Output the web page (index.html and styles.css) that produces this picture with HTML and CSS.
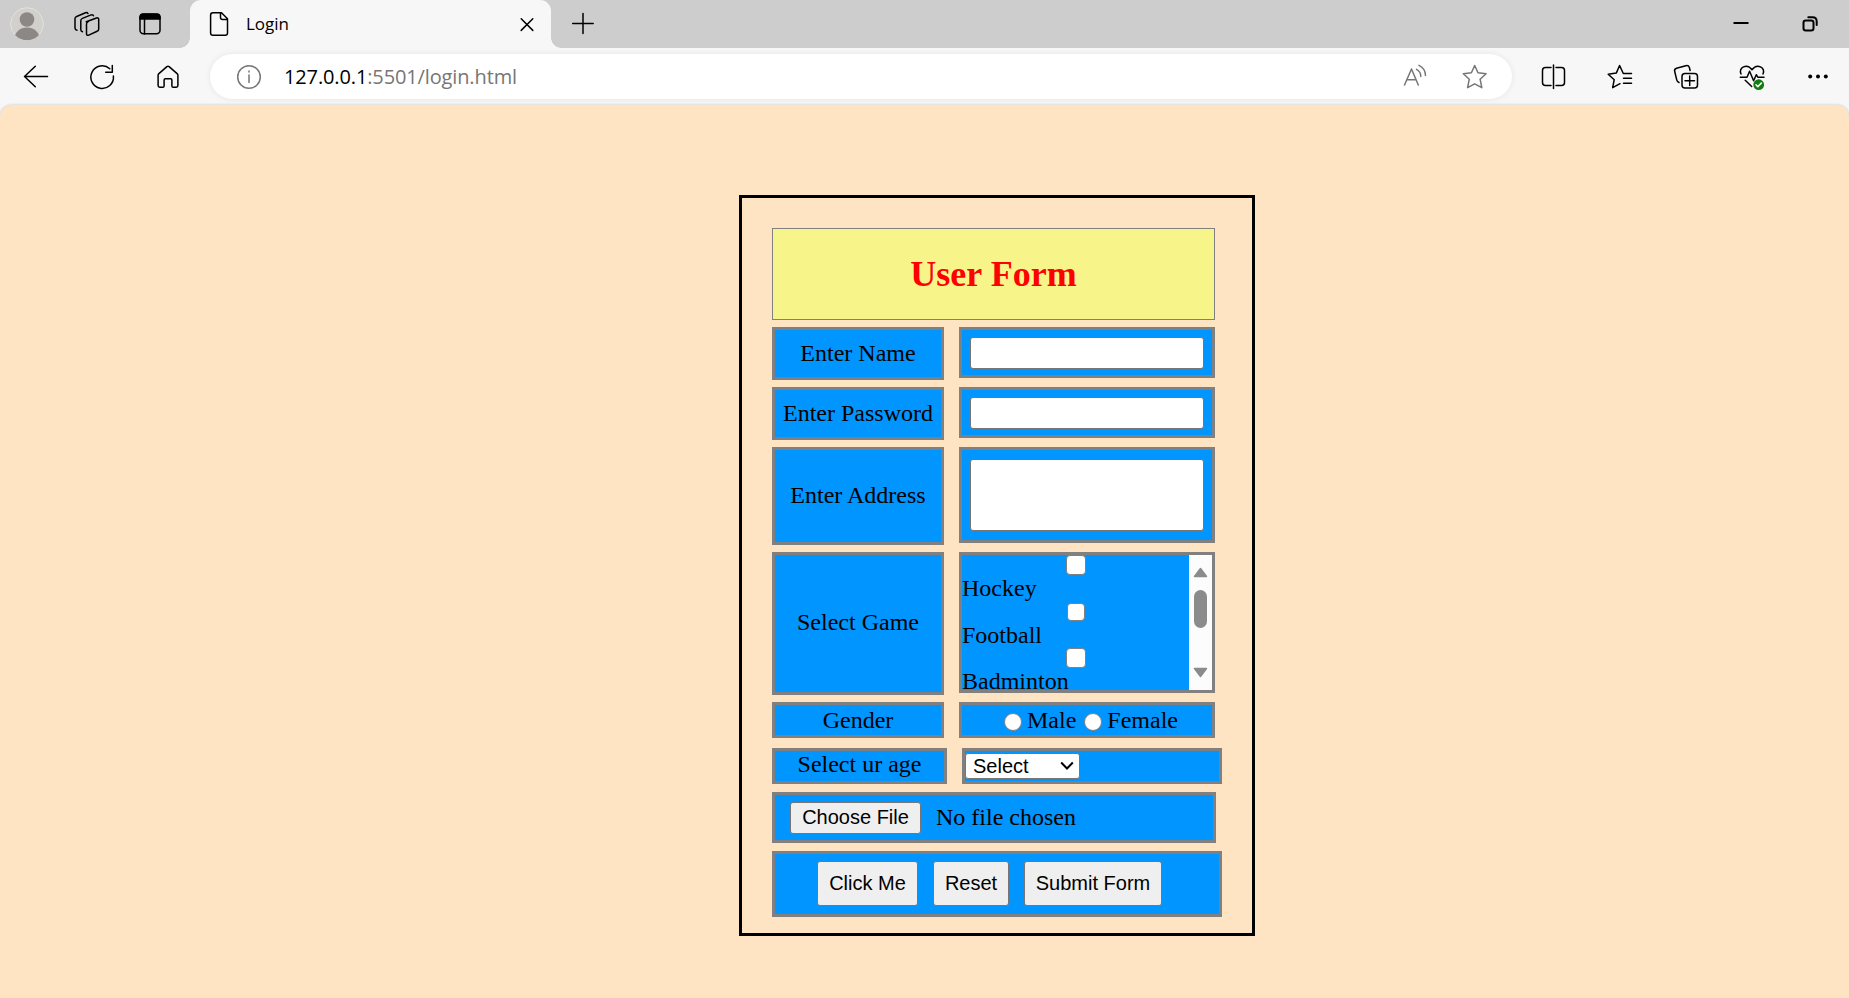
FILE: index.html
```html
<!DOCTYPE html>
<html lang="en">
<head>
<meta charset="utf-8">
<title>Login</title>
<link rel="stylesheet" href="styles.css">
</head>
<body>
<header class="tabbar">
  <svg class="avatar" viewBox="0 0 34 34"><defs><clipPath id="face"><circle cx="17" cy="17" r="16.3"/></clipPath></defs><circle cx="17" cy="17" r="16.3" fill="#d2d0cd" stroke="#e4e2da"/><g clip-path="url(#face)" fill="#8b8886"><circle cx="17" cy="12.5" r="7.3"/><ellipse cx="17" cy="31.5" rx="12.5" ry="11"/></g></svg>
  <svg class="icon spaces" viewBox="0 0 28 28"><path d="M13.3 11.8 23.5 8q2.200-.6 2.200 1.600v9.600q0 1.600-1.600 2.100l-8.300 3.800q-2.300.9-2.300-1.400v-9.800q0-1.600 1.800-2.300M9.500 21.700q-1.700-.3-1.700-2v-9q0-1.700 1.600-2.300l8.700-3.500q1.800-.6 2.400.9M4 20.200q-2-.4-2-2.200V8.800q0-1.700 1.600-2.300L12.500 2.800q1.800-.6 2.400.7"/></svg>
  <svg class="icon sidebar" viewBox="0 0 28 28"><rect x="4" y="4.200" width="20" height="19.600" rx="3.500"/><path d="M8.500 9v15"/><path d="M4 9V6.500Q4.500 4 7 4h14q2.500 0 3 2.500V9z" fill="#000"/></svg>
  <div class="tab">
    <svg class="icon" viewBox="0 0 28 28"><path d="M8 2.700h8.500l6 6V23q0 2.300-2.300 2.300H8Q5.600 25.300 5.600 23V5Q5.600 2.700 8 2.700zM15.500 3v4.500q0 2 2 2h5"/></svg>
    <span class="tab-title">Login</span>
    <svg class="icon close" viewBox="0 0 28 28"><path d="m8.200 8.800 11.600 11.600m0-11.600L8.200 20.400"/></svg>
  </div>
  <svg class="icon plus" viewBox="0 0 28 28"><path d="M14 3.500v20M3.700 13.500h20.500"/></svg>
  <svg class="icon minimize" viewBox="0 0 28 28"><path d="M6.500 13h15" stroke-width="2" stroke-linecap="butt"/></svg>
  <svg class="icon restore" viewBox="0 0 28 28"><g stroke-width="2"><rect x="7.500" y="10.500" width="10" height="10" rx="2.300"/><path d="M12.300 7.300h4.200q4.200 0 4.200 4.200V15"/></g></svg>
</header>
<nav class="toolbar">
  <svg class="icon" viewBox="0 0 28 28"><path d="M25.500 13.500H2.500m10.800-10.300L2.500 13.500l10.800 10.300"/></svg>
  <svg class="icon" viewBox="0 0 28 28"><path d="M25.400 13a11.300 11.300 0 1 1-3.600-7.200M24.300 2.600v6.700h-6.600"/></svg>
  <svg class="icon" viewBox="0 0 28 28"><path d="M5.800 24.300q-1.700 0-1.700-1.700V12.300q0-1 .8-1.700l8-7q1.100-.9 2.200 0l8 7q.8.7.8 1.700v10.300q0 1.700-1.700 1.700h-3q-1.300 0-1.300-1.300V17q0-1.300-1.300-1.300h-5.200q-1.300 0-1.300 1.300v6q0 1.300-1.300 1.300z"/></svg>
  <div class="address">
    <svg class="icon muted" viewBox="0 0 28 28"><circle cx="14" cy="14" r="11.300"/><path d="M14 12v7.500M14 8v1"/></svg>
    <span class="url"><b>127.0.0.1</b>:5501/login.html</span>
    <svg class="icon muted read" viewBox="0 0 28 28"><path d="M3.500 22 10.500 6l6.800 16M6 16.700h9M15.500 6.300q4.400 2.200 4.300 7.200M18 2.300q6.500 3.200 6.500 10.200"/></svg>
    <svg class="icon muted star" viewBox="0 0 28 28"><path d="m13.700 2.500 3.300 7.300 8.100.9-6 5.500 1.700 8.500-7.100-3.900-7.100 3.900 1.700-8.500-6-5.500 8.100-.9z"/></svg>
  </div>
  <svg class="icon" viewBox="0 0 28 28"><path d="M13.500 2v23.500M11 4.500H5.500q-3 0-3 3v12q0 3 3 3H11M16 4.500h5.500q3 0 3 3v12q0 3-3 3H16"/></svg>
  <svg class="icon" viewBox="0 0 28 28"><path d="M25.500 10.500h-8.200l-3.700-8-3.300 7.600-8.100 1.100 6 5.500-1.500 8 7.300-4M17.500 15.200h8M17.500 20.200h8"/></svg>
  <svg class="icon" viewBox="0 0 28 28"><rect x="10" y="10.500" width="15.500" height="14.500" rx="3"/><path d="M17.700 13v9.500M13 17.800h9.500M7 19.500q-1.800-.6-2.200-2.300L2.700 8.500Q2 6 4.500 5.200l9.300-2.500q2.700-.6 3.600 1.800l.7 3"/></svg>
  <svg class="icon" viewBox="0 0 28 28"><path d="M3 11C0 4.500 9-.2 14 6.700 19-.2 28 4.500 25 11M2.300 14.200H9l2.600-6 4 9.500 2.700-6 1.500 2.500H26M7.200 17.300l6.500 6.200"/><circle cx="20.700" cy="21.700" r="5.400" fill="#107c10" stroke="none"/><path d="m18 21.800 1.800 1.800 3.500-3.500" stroke="#fff"/></svg>
  <svg class="icon" viewBox="0 0 28 28"><g fill="#000" stroke="none"><circle cx="6.200" cy="13.600" r="2"/><circle cx="14" cy="13.600" r="2"/><circle cx="21.800" cy="13.600" r="2"/></g></svg>
</nav>
<main class="page">
  <form class="form">
    <h1 class="title">User Form</h1>
    <div class="row"><label class="label">Enter Name</label><div class="field center"><input class="text" type="text"></div></div>
    <div class="row"><label class="label">Enter Password</label><div class="field center"><input class="text" type="password"></div></div>
    <div class="row address-row"><label class="label">Enter Address</label><div class="field center"><textarea class="text area"></textarea></div></div>
    <div class="row game-row"><label class="label">Select Game</label>
      <div class="field games">
        <div class="game-list">
          <div class="game"><input class="check" type="checkbox">Hockey</div>
          <div class="game"><input class="check small" type="checkbox">Football</div>
          <div class="game"><input class="check" type="checkbox">Badminton</div>
        </div>
        <div class="scrollbar">
          <svg class="arrow" viewBox="0 0 15 11"><path d="M7.500 1.500 13.500 9.500h-12z"/></svg>
          <div class="thumb"></div>
          <svg class="arrow down" viewBox="0 0 15 11"><path d="M7.500 9.500 13.500 1.500h-12z"/></svg>
        </div>
      </div>
    </div>
    <div class="row gender-row"><label class="label">Gender</label><div class="field genders"><input class="radio" type="radio" name="gender"><span class="male">Male</span><input class="radio" type="radio" name="gender"><span>Female</span></div></div>
    <div class="row age-row"><label class="label">Select ur age</label><div class="field ages"><div class="select">Select<svg class="chevron" viewBox="0 0 14 10"><path d="m1.200 1.500 5.800 6 5.800-6"/></svg></div></div></div>
    <div class="file-row"><button class="button choose" type="button">Choose File</button><span>No file chosen</span></div>
    <div class="actions"><button class="button click" type="button">Click Me</button><button class="button reset" type="button">Reset</button><button class="button submit" type="button">Submit Form</button></div>
  </form>
</main>
</body>
</html>
```
FILE: styles.css
```css
* { box-sizing: border-box; }
body { margin: 0; height: 998px; overflow: hidden; display: flex; flex-direction: column; background: #f7f7f7; font-family: "Liberation Serif", serif; font-size: 24px; color: #000; }
svg { display: block; flex: none; }
.icon { width: 28px; height: 28px; fill: none; stroke: #000; stroke-width: 1.5; stroke-linecap: round; stroke-linejoin: round; }
.muted { stroke: #767676; }
.tabbar { height: 48px; flex: none; display: flex; align-items: center; background: #cdcdcd; padding-left: 10px; }
.avatar { width: 34px; height: 34px; }
.spaces { margin-left: 29px; }
.sidebar { margin-left: 35px; }
.tab { position: relative; width: 361px; height: 48px; margin-left: 26px; padding-left: 15px; display: flex; align-items: center; background: #f7f7f7; border-radius: 11px 11px 0 0; font-family: "Open Sans", sans-serif; font-size: 17px; }
.tab::before, .tab::after { content: ""; position: absolute; bottom: 0; width: 10px; height: 10px; }
.tab::before { left: -10px; background: radial-gradient(circle at 0 0, #cdcdcd 9.5px, #f7f7f7 10px); }
.tab::after { right: -10px; background: radial-gradient(circle at 100% 0, #cdcdcd 9.5px, #f7f7f7 10px); }
.tab-title { margin-left: 13px; padding-bottom: 2px; }
.close { margin-left: auto; margin-right: 10px; }
.plus { margin-left: 18px; }
.minimize { margin-left: auto; }
.restore { margin-left: 41px; margin-right: 25px; }
.toolbar { height: 57px; flex: none; display: flex; align-items: center; gap: 38px; padding-left: 22px; }
.address { width: 1302px; height: 45px; margin: 0 -10px; padding: 0 23px 0 25px; display: flex; align-items: center; background: #fff; border-radius: 23px; box-shadow: 0 0 6px rgba(0,0,0,.08); font-family: "Open Sans", sans-serif; font-size: 20px; color: #767676; }
.url { margin-left: 21px; white-space: nowrap; letter-spacing: -0.13px; }
.url b { font-weight: 400; color: #000; }
.read { margin-left: auto; margin-right: 32px; }
.page { flex: 1; padding: 90px 0 0 739px; background: #ffe4c4; border-radius: 12px 12px 0 0; box-shadow: 0 0 3px rgba(0,0,0,.2); }
.form { width: 516px; height: 741px; padding: 30px; border: 3px solid #000; }
.title { width: 443px; height: 92px; margin: 0 0 7px; border: 1px solid #808080; background: #f7f589; color: #f00; font-size: 36px; line-height: 90px; text-align: center; }
.row { width: 443px; height: 53px; margin-bottom: 7px; display: grid; grid-template-columns: 172px 256px; grid-template-rows: 100%; column-gap: 15px; align-items: start; }
.label, .field, .file-row, .actions { border: 3px solid #808080; background: #0095ff; }
.label { height: 100%; display: flex; align-items: center; justify-content: center; }
.field { height: calc(100% - 2px); }
.center { display: flex; align-items: center; justify-content: center; }
.text { width: 234px; height: 32px; margin: 0; padding: 2px; border: 1px solid #767676; border-radius: 3px; background: #fff; outline: 0; resize: none; }
.address-row { height: 98px; }
.address-row .label, .game-row .label { padding-bottom: 2px; }
.area { height: 72px; }
.game-row { height: 143px; }
.games { display: flex; overflow: hidden; }
.game-list { flex: 1; overflow: hidden; }
.game { display: flow-root; height: 46.5px; line-height: 27px; }
.check { appearance: none; display: block; width: 20px; height: 20px; margin: 0 auto; border: 1.5px solid #808080; border-radius: 4px; background: #fff; }
.small { width: 18px; height: 18px; margin: 1px auto; }
.scrollbar { width: 23px; padding-top: 12px; display: flex; flex-direction: column; align-items: center; background: #fcfcfc; }
.arrow { width: 15px; height: 11px; fill: #8b8b8b; stroke: #8b8b8b; stroke-width: 1.5; stroke-linejoin: round; }
.thumb { width: 13px; height: 38px; margin-top: 12px; border-radius: 7px; background: #8b8b8b; }
.down { margin-top: 39px; }
.gender-row { height: 36px; }
.gender-row .field, .age-row .field { height: 100%; }
.genders { display: flex; align-items: center; padding-left: 42px; line-height: 30px; }
.radio { appearance: none; width: 18px; height: 18px; margin: 4px 5px 0 0; border: 1.5px solid #808080; border-radius: 50%; background: #fff; }
.male { margin-right: 8px; }
.age-row { width: 450px; height: 36px; margin-top: 10px; margin-bottom: 8px; grid-template-columns: 175px 260px; }
.age-row .label { padding-bottom: 3px; }
.ages { padding-top: 2px; }
.select { width: 115px; height: 26px; padding: 0 5px 0 7px; display: flex; align-items: center; justify-content: space-between; border: 1px solid #767676; border-radius: 3px; background: #fff; font: 20px "Liberation Sans", sans-serif; }
.chevron { width: 14px; height: 10px; fill: none; stroke: #000; stroke-width: 2; }
.file-row { width: 444px; height: 51px; padding-left: 15px; display: flex; align-items: center; gap: 15px; }
.button { margin: 0; padding: 0; border: 1px solid #767676; border-radius: 3px; background: #efefef; font: 20px "Liberation Sans", sans-serif; color: #000; }
.choose { width: 131px; height: 32px; }
.actions { width: 450px; height: 66px; margin-top: 8px; display: flex; align-items: flex-start; gap: 15px; padding: 7px 0 0 42px; }
.click { width: 101px; height: 45px; }
.reset { width: 76px; height: 45px; }
.submit { width: 138px; height: 45px; }
.click, .reset, .submit { padding-bottom: 1px; }
```
